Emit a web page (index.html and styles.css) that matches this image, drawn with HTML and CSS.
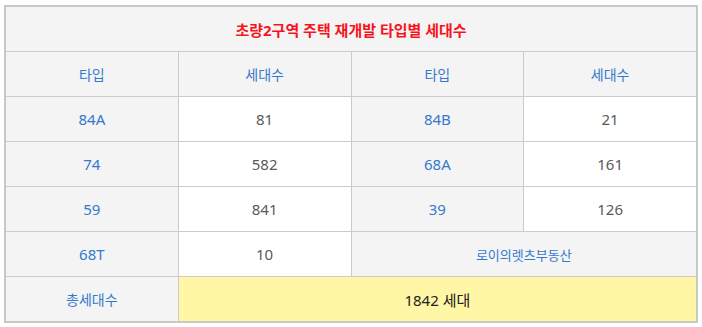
FILE: index.html
```html
<!DOCTYPE html>
<html lang="ko">
<head>
<meta charset="utf-8">
<link rel="stylesheet" href="styles.css">
</head>
<body>
<div class="board">
  <div class="cell title span4">초량2구역 주택 재개발 타입별 세대수</div>
  <div class="cell label">타입</div>
  <div class="cell label">세대수</div>
  <div class="cell label">타입</div>
  <div class="cell label">세대수</div>

  <div class="cell label num">84A</div>
  <div class="cell value">81</div>
  <div class="cell label num">84B</div>
  <div class="cell value">21</div>

  <div class="cell label num">74</div>
  <div class="cell value">582</div>
  <div class="cell label num">68A</div>
  <div class="cell value">161</div>

  <div class="cell label num">59</div>
  <div class="cell value">841</div>
  <div class="cell label num">39</div>
  <div class="cell value">126</div>

  <div class="cell label num">68T</div>
  <div class="cell value">10</div>
  <div class="cell label credit span2">로이의렛츠부동산</div>

  <div class="cell label">총세대수</div>
  <div class="cell total span3">1842 세대</div>
</div>
</body>
</html>
```

FILE: styles.css
```css
html, body {
  margin: 0;
  padding: 0;
  background: #fff;
}
body {
  padding: 5px 0 0 4px;
  font-family: "Noto Sans", "Noto Sans CJK KR", sans-serif;
  font-size: 14px;
}
.board {
  width: 690px;
  display: grid;
  grid-template-columns: repeat(4, 1fr);
  grid-auto-rows: 44px;
  gap: 1px;
  background: #cbcbcb;
  border: 2px solid #c8c8c8;
}
.cell {
  display: flex;
  align-items: center;
  justify-content: center;
  background: #fff;
}
.span2 { grid-column: span 2; }
.span3 { grid-column: span 3; }
.span4 { grid-column: span 4; }
.title {
  background: #f4f4f4;
  color: #f5141e;
  font-weight: 700;
  font-size: 15px;
}
.label {
  background: #f4f4f4;
  color: #3479cc;
  font-size: 14px;
}
.num {
  font-size: 15px;
}
.value {
  color: #5a5a5a;
  font-size: 15px;
}
.credit {
  font-size: 13px;
}
.total {
  background: #fff7a5;
  color: #222;
  font-size: 15px;
}
```
